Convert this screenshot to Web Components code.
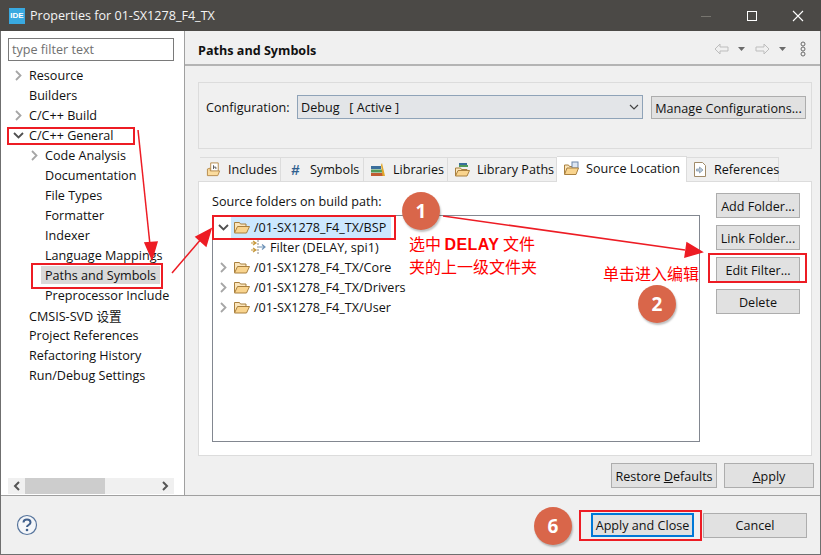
<!DOCTYPE html>
<html lang="zh">
<head>
<meta charset="utf-8">
<title>Properties for 01-SX1278_F4_TX</title>
<style>
    html, body { margin: 0; height: 100%; overflow: hidden; }
    body { font: 12.6px "Open Sans", "Noto Sans CJK SC", sans-serif; color: #111; }
</style>
</head>
<body>
<ide-dialog>
    <dialog-title slot="title" text="Properties for 01-SX1278_F4_TX"></dialog-title>
    <nav-panel slot="nav"></nav-panel>
    <paths-page slot="page"></paths-page>
    <dialog-footer slot="footer"></dialog-footer>
</ide-dialog>
<red-notes></red-notes>

<script>
    const folderIcon = `<svg width="16" height="14" viewBox="0 0 16 14"><path d="M.5 12.500V2.500h5l1 1.500h5.500v2" fill="#fbe6bd" stroke="#a9803f"/><path d="M.5 13 3.500 6.500h12L12.500 13z" fill="#f9d48e" stroke="#a9803f"/></svg>`;
    const chevronRight = `<svg width="9" height="11" viewBox="0 0 9 11"><path d="M2 1l4.500 4.500L2 10" fill="none" stroke="#a6a6a6" stroke-width="1.800"/></svg>`;
    const chevronDown = `<svg width="11" height="9" viewBox="0 0 11 9"><path d="M1 2l4.500 4.500L10 2" fill="none" stroke="#505050" stroke-width="1.800"/></svg>`;

    class IdeDialog extends HTMLElement {
        constructor() {
            super();
            this.attachShadow({ mode: "open" });
            this.shadowRoot.innerHTML = `
                <style>
                    :host {
                        display: grid;
                        grid-template-columns: 184px 1fr;
                        grid-template-rows: 31px 1fr 59px;
                        width: 821px;
                        height: 555px;
                        box-sizing: border-box;
                        border: solid #6f6f6f;
                        border-width: 0 1px 1px 1px;
                        background: #f0f0f0;
                    }
                    ::slotted([slot=title]), ::slotted([slot=footer]) { grid-column: 1 / 3; }
                    ::slotted([slot=nav]) { min-height: 0; }
                    ::slotted([slot=page]) { min-height: 0; }
                </style>
                <slot name="title"></slot>
                <slot name="nav"></slot>
                <slot name="page"></slot>
                <slot name="footer"></slot>
            `;
        }
    }
    customElements.define("ide-dialog", IdeDialog);

    class DialogTitle extends HTMLElement {
        constructor() {
            super();
            this.attachShadow({ mode: "open" });
        }
        connectedCallback() {
            this.shadowRoot.innerHTML = `
                <style>
                    :host {
                        display: flex;
                        align-items: center;
                        margin: 0 -1px;
                        background: #4b4946;
                        color: #f4f4f4;
                        padding-left: 9px;
                    }
                    .logo {
                        width: 16px; height: 16px;
                        background: #39a9e0;
                        color: #fff;
                        font: bold 8px "Liberation Sans", sans-serif;
                        display: flex; align-items: center; justify-content: center;
                        margin-right: 5px;
                    }
                    .name { flex: 1; }
                    .ctl { width: 46px; height: 31px; display: flex; align-items: center; justify-content: center; }
                </style>
                <span class="logo">IDE</span>
                <span class="name">${this.getAttribute("text")}</span>
                <span class="ctl"><svg width="12" height="12"><path d="M1 6.500h10" stroke="#77756f"/></svg></span>
                <span class="ctl"><svg width="12" height="12"><rect x="1.500" y="1.500" width="9" height="9" fill="none" stroke="#fff"/></svg></span>
                <span class="ctl"><svg width="12" height="12"><path d="M1 1l10 10M11 1L1 11" stroke="#fff" stroke-width="1.100"/></svg></span>
            `;
        }
    }
    customElements.define("dialog-title", DialogTitle);

    class NavPanel extends HTMLElement {
        constructor() {
            super();
            this.attachShadow({ mode: "open" });
            // level 0 = top, level 1 = child; arrow: r, d or nothing
            this.items = [
                ["Resource", 0, "r"], ["Builders", 0], ["C/C++ Build", 0, "r"], ["C/C++ General", 0, "d"],
                ["Code Analysis", 1, "r"], ["Documentation", 1], ["File Types", 1], ["Formatter", 1],
                ["Indexer", 1], ["Language Mappings", 1], ["Paths and Symbols", 1, "", true],
                ["Preprocessor Include", 1], ["CMSIS-SVD 设置", 0], ["Project References", 0],
                ["Refactoring History", 0], ["Run/Debug Settings", 0]
            ];
        }
        connectedCallback() {
            this.render();
        }
        render() {
            this.shadowRoot.innerHTML = `
                <style>
                    :host {
                        display: flex;
                        flex-direction: column;
                        background: #fff;
                        border-right: 1px solid #a0a0a0;
                        overflow: hidden;
                    }
                    .filter {
                        margin: 7px 10px 4px 7px;
                        height: 23px;
                        box-sizing: border-box;
                        border: 1px solid #7a7a7a;
                        padding: 0 3px;
                        line-height: 22px;
                        color: #707070;
                    }
                    .tree { flex: 1; overflow: hidden; }
                    .row { display: flex; height: 20px; align-items: center; white-space: nowrap; }
                    .arrow { width: 12px; margin-left: 11px; margin-right: 5px; display: flex; justify-content: center; flex: none; }
                    .row.l1 .arrow { margin-left: 27px; }
                    .row.sel span.label { background: #d9d9d9; margin-left: -4px; padding: 2px 4px 0; line-height: 16px; }
                    .scroll {
                        display: flex; align-items: center; justify-content: space-between;
                        height: 16px; margin: 0 10px 1px 7px; background: #f0f0f0; position: relative;
                    }
                    .thumb { position: absolute; left: 17px; top: 0; width: 80px; height: 16px; background: #cdcdcd; }
                    .scroll svg { margin: 0 5px; }
                </style>
                <div class="filter">type filter text</div>
                <div class="tree">
                    ${this.items.map(([label, level, arrow, sel]) => `
                        <div class="row l${level} ${sel ? "sel" : ""}">
                            <span class="arrow">${arrow === "r" ? chevronRight : arrow === "d" ? chevronDown : ""}</span>
                            <span class="label">${label}</span>
                        </div>
                    `).join("")}
                </div>
                <div class="scroll">
                    <svg width="7" height="10"><path d="M6 1L2 5l4 4" fill="none" stroke="#555" stroke-width="2"/></svg>
                    <span class="thumb"></span>
                    <svg width="7" height="10"><path d="M1 1l4 4-4 4" fill="none" stroke="#555" stroke-width="2"/></svg>
                </div>
            `;
        }
    }
    customElements.define("nav-panel", NavPanel);

    class PushButton extends HTMLElement {
        constructor() {
            super();
            this.attachShadow({ mode: "open" });
            this.shadowRoot.innerHTML = `
                <style>
                    :host {
                        display: flex;
                        align-items: center;
                        justify-content: center;
                        box-sizing: border-box;
                        height: 25px;
                        padding-top: 2px;
                        background: #e1e1e1;
                        border: 1px solid #adadad;
                        white-space: nowrap;
                    }
                    :host([focused]) { border: 2px solid #0078d7; height: 24px; padding-top: 0; }
                </style>
                <span><slot></slot></span>
            `;
        }
    }
    customElements.define("push-button", PushButton);

    class TabStrip extends HTMLElement {
        constructor() {
            super();
            this.attachShadow({ mode: "open" });
            this.tabs = [
                ["Includes", 81, `<svg width="16" height="17" viewBox="0 0 17 17"><path d="M5 1.500h8v9H5z" fill="#fff" stroke="#b58a4a"/><path d="M8 4v4M8 6h2.500v2" fill="none" stroke="#555"/><path d="M1.500 15V8l3-1v3h10l-2 5z" fill="#fbdc9e" stroke="#b58a4a"/></svg>`],
                ["Symbols", 83, `<span style="font:bold 15px 'Liberation Sans';color:#2f5f8f;width:17px;text-align:center">#</span>`],
                ["Libraries", 84, `<svg width="17" height="17" viewBox="0 0 17 17"><rect x="1" y="5" width="10" height="3" fill="#3a6e9c"/><rect x="1" y="8.500" width="11" height="3" fill="#4f9a59"/><rect x="1" y="12" width="12" height="3" fill="#c05b32"/><path d="M12 2l3 13h-2.500L11 4z" fill="#e0a72c"/></svg>`],
                ["Library Paths", 109, `<svg width="17" height="17" viewBox="0 0 17 17"><rect x="5" y="2" width="8" height="2" fill="#3a6e9c"/><rect x="5" y="4" width="9" height="2" fill="#4f9a59"/><path d="M1.500 15V7h5l1 1.500H13V10" fill="#fbe6bd" stroke="#a9803f"/><path d="M1.500 15L4 9.500h11.500L13 15z" fill="#f9d48e" stroke="#a9803f"/></svg>`],
                ["Source Location", 130, `<svg width="17" height="15" viewBox="0 0 17 15"><path d="M1.500 13V4h4l1 1.500H12V7" fill="#fbe6bd" stroke="#a9803f"/><rect x="9" y="1" width="6" height="6" fill="#dde6f2" stroke="#6f86a8"/><path d="M1.500 13.500 4 7h11.500L13 13.500z" fill="#f9d48e" stroke="#a9803f"/></svg>`, true],
                ["References", 92, `<svg width="15" height="17" viewBox="0 0 15 17"><path d="M1.500 1.500h8l3 3v11h-11z" fill="#fff" stroke="#a08a68"/><path d="M3.500 8h3V6l3.500 3-3.500 3v-2h-3z" fill="#b8c8d8" stroke="#7e93a8" stroke-width=".7"/></svg>`]
            ];
        }
        connectedCallback() {
            this.shadowRoot.innerHTML = `
                <style>
                    :host { display: flex; align-items: flex-end; height: 25px; padding-left: 2px; box-sizing: border-box; }
                    .tab {
                        display: flex; align-items: center; gap: 6px;
                        box-sizing: border-box;
                        height: 24px;
                        padding: 0 0 1px 6px;
                        background: #f0f0f0;
                        border: 1px solid #dcdcdc;
                        border-bottom: 0;
                        border-left-width: 0;
                        white-space: nowrap;
                    }
                    .tab:first-child { border-left-width: 1px; }
                    .tab.on { background: #fff; height: 26px; padding: 0 0 2px 6px; position: relative; top: 1px; margin-top: -2px; }
                    .tab svg, .tab span { flex: none; }
                </style>
                ${this.tabs.map(([name, w, icon, on]) => `
                    <div class="tab ${on ? "on" : ""}" style="width:${w}px">${icon}<span>${name}</span></div>
                `).join("")}
            `;
        }
    }
    customElements.define("tab-strip", TabStrip);

    class SourceTree extends HTMLElement {
        constructor() {
            super();
            this.attachShadow({ mode: "open" });
            this.shadowRoot.innerHTML = `
                <style>
                    :host {
                        display: block;
                        flex: 1;
                        border: 1px solid #828790;
                        background: #fff;
                        padding-top: 1px;
                    }
                    .row { display: flex; align-items: center; height: 20px; white-space: nowrap; }
                    .arrow { width: 12px; margin: 0 2px 0 4px; display: flex; justify-content: center; }
                    .item { display: flex; align-items: center; gap: 4px; padding: 0 5px 0 3px; height: 21px; }
                    .sel .item { background: #cce8ff; }
                    .filter { padding-left: 37px; gap: 4px; }
                </style>
                <div class="row sel"><span class="arrow">${chevronDown}</span><span class="item">${folderIcon}<span>/01-SX1278_F4_TX/BSP</span></span></div>
                <div class="row filter">
                    <svg width="16" height="16" viewBox="0 0 16 16"><path d="M1 4h4M3 2l3 2-3 2M1 11h4M3 9l3 2-3 2" fill="none" stroke="#c79a3e" stroke-width="1.200"/><path d="M8 1v14" stroke="#8a8a8a" stroke-dasharray="2 1"/><path d="M9 8h6M12 5.500 15 8l-3 2.500" fill="none" stroke="#6f93b8" stroke-width="1.200"/></svg>
                    <span>Filter (DELAY, spi1)</span>
                </div>
                <div class="row"><span class="arrow">${chevronRight}</span><span class="item">${folderIcon}<span>/01-SX1278_F4_TX/Core</span></span></div>
                <div class="row"><span class="arrow">${chevronRight}</span><span class="item">${folderIcon}<span>/01-SX1278_F4_TX/Drivers</span></span></div>
                <div class="row"><span class="arrow">${chevronRight}</span><span class="item">${folderIcon}<span>/01-SX1278_F4_TX/User</span></span></div>
            `;
        }
    }
    customElements.define("source-tree", SourceTree);

    class PathsPage extends HTMLElement {
        constructor() {
            super();
            this.attachShadow({ mode: "open" });
            this.shadowRoot.innerHTML = `
                <style>
                    :host { display: flex; flex-direction: column; overflow: hidden; }
                    .head {
                        display: flex; align-items: center; height: 35px; box-sizing: border-box;
                        padding: 3px 14px 0 13px;
                        border-bottom: 2px solid #b4b4b4;
                    }
                    .head b { flex: 1; font-weight: 700; padding-top: 2px; }
                    .head .nav { display: flex; align-items: center; gap: 9px; }
                    .config {
                        margin: 16px 8px 0 13px;
                        height: 67px; box-sizing: border-box;
                        border: 1px solid #dcdcdc;
                        padding: 12px 5px 0 7px;
                        display: flex; align-items: flex-start; gap: 3px;
                    }
                    .config .lbl { line-height: 26px; width: 88px; }
                    .combo {
                        flex: 1; height: 24px; box-sizing: border-box; margin-right: 5px;
                        border: 1px solid #8fa3b8; background: #e3e5e8;
                        display: flex; align-items: center; justify-content: space-between; padding: 1px 3px 0;
                        white-space: pre;
                    }
                    .tabs { margin: 7px 0 0 13px; }
                    .panel {
                        margin: 0 8px 0 13px; height: 275px; box-sizing: border-box;
                        background: #fff; border: 1px solid #dcdcdc;
                        padding: 11px 6px 13px 13px;
                        display: grid; grid-template-columns: 488px 84px; column-gap: 16px;
                        grid-template-rows: 22px 1fr;
                    }
                    .panel .cap { line-height: 18px; }
                    .panel .btns { grid-column: 2; grid-row: 1 / 3; display: flex; flex-direction: column; gap: 7px; }
                    .panel source-tree { grid-row: 2; }
                    .actions { display: flex; justify-content: flex-end; gap: 7px; margin: 7px 6px 0 0; }
                    u { text-underline-offset: 1px; }
                </style>
                <div class="head">
                    <b>Paths and Symbols</b>
                    <span class="nav">
                        <svg width="15" height="12" viewBox="0 0 15 12"><path d="M1 6l5-5v3h8v4H6v3z" fill="#f0f0f0" stroke="#bdbdbd"/></svg>
                        <svg width="7" height="4"><path d="M0 0h7L3.500 4z" fill="#6a6a6a"/></svg>
                        <svg width="15" height="12" viewBox="0 0 15 12" style="margin-left:1px"><path d="M14 6L9 1v3H1v4h8v3z" fill="#f0f0f0" stroke="#bdbdbd"/></svg>
                        <svg width="7" height="4"><path d="M0 0h7L3.500 4z" fill="#6a6a6a"/></svg>
                        <svg width="6" height="16" style="margin-left:5px"><g fill="none" stroke="#6a6a6a"><circle cx="3" cy="3" r="2"/><circle cx="3" cy="8" r="2"/><circle cx="3" cy="13" r="2"/></g></svg>
                    </span>
                </div>
                <div class="config">
                    <span class="lbl">Configuration:</span>
                    <div class="combo"><span>Debug   [ Active ]</span><svg width="10" height="7"><path d="M1 1l4 4 4-4" fill="none" stroke="#444" stroke-width="1.200"/></svg></div>
                    <push-button style="width:155px;height:23px;margin-top:1px">Manage Configurations...</push-button>
                </div>
                <tab-strip class="tabs"></tab-strip>
                <div class="panel">
                    <div class="cap">Source folders on build path:</div>
                    <source-tree></source-tree>
                    <div class="btns">
                        <push-button>Add Folder...</push-button>
                        <push-button>Link Folder...</push-button>
                        <push-button>Edit Filter...</push-button>
                        <push-button>Delete</push-button>
                    </div>
                </div>
                <div class="actions">
                    <push-button style="width:106px">Restore <u>D</u>efaults</push-button>
                    <push-button style="width:90px"><u>A</u>pply</push-button>
                </div>
            `;
        }
    }
    customElements.define("paths-page", PathsPage);

    class DialogFooter extends HTMLElement {
        constructor() {
            super();
            this.attachShadow({ mode: "open" });
            this.shadowRoot.innerHTML = `
                <style>
                    :host {
                        display: flex; align-items: center; gap: 9px;
                        border-top: 1px solid #a0a0a0;
                        padding: 0 13px 0 15px;
                    }
                    .help { margin-right: auto; display: flex; }
                </style>
                <span class="help"><svg width="22" height="22" viewBox="0 0 22 22">
                    <circle cx="11" cy="11" r="9.500" fill="#f4f6f9" stroke="#56749c" stroke-width="1.200"/>
                    <path d="M7.500 8.500C7.500 6.500 9 5.500 11 5.500s3.500 1 3.500 3c0 2.500-3.500 2.500-3.500 4.500" fill="none" stroke="#3f5f8c" stroke-width="2"/>
                    <circle cx="11" cy="16" r="1.300" fill="#3f5f8c"/>
                </svg></span>
                <push-button focused style="width:103px">Apply and Close</push-button>
                <push-button style="width:104px;padding-top:0">Cancel</push-button>
            `;
        }
    }
    customElements.define("dialog-footer", DialogFooter);

    // The red marks someone drew on top of the screenshot: these sit over the dialog
    class RedNotes extends HTMLElement {
        constructor() {
            super();
            this.attachShadow({ mode: "open" });
            this.boxes = [
                [7, 127, 128, 18], [31, 263, 132, 26], [212, 215, 184, 25], [708, 253, 99, 30], [579, 510, 123, 31]
            ];
            this.badges = [[421, 211, "1"], [657, 304, "2"], [553, 526, "6"]];
            this.texts = [
                [409, 232, "选中 <b>DELAY</b> 文件"], [409, 255, "夹的上一级文件夹"], [603, 262, "单击进入编辑"]
            ];
        }
        connectedCallback() {
            this.shadowRoot.innerHTML = `
                <style>
                    :host { position: absolute; inset: 0; display: block; pointer-events: none; }
                    .box { position: absolute; box-sizing: border-box; border: 2px solid #ed1c24; }
                    .badge {
                        position: absolute; width: 38px; height: 38px; margin: -19px 0 0 -19px;
                        border-radius: 50%; background: #d9664a; color: #fff;
                        box-shadow: 1px 2px 2px rgba(0,0,0,.25);
                        font: bold 19px/38px "Open Sans", sans-serif; text-align: center;
                    }
                    .note { position: absolute; color: #f00; font: 16px/22px "Noto Sans CJK SC", sans-serif; white-space: nowrap; }
                    .note b { font-family: "Liberation Sans", sans-serif; letter-spacing: .4px; }
                    svg { position: absolute; left: 0; top: 0; }
                </style>
                <svg width="821" height="555">
                    <g stroke="#ed1c24" stroke-width="1.500" fill="#ed1c24">
                        <path d="M138 130L150 245"/><path d="M152 259L145 243L157 242z"/>
                        <path d="M172 273L202 238"/><path d="M211 229L206 246L196 237z"/>
                        <path d="M443 216L685 250"/><path d="M702 252L685 257L687 243z"/>
                    </g>
                </svg>
                ${this.boxes.map(([x, y, w, h]) => `<div class="box" style="left:${x}px;top:${y}px;width:${w}px;height:${h}px"></div>`).join("")}
                ${this.badges.map(([x, y, t]) => `<div class="badge" style="left:${x}px;top:${y}px">${t}</div>`).join("")}
                ${this.texts.map(([x, y, t]) => `<div class="note" style="left:${x}px;top:${y}px">${t}</div>`).join("")}
            `;
        }
    }
    customElements.define("red-notes", RedNotes);
</script>
</body>
</html>
